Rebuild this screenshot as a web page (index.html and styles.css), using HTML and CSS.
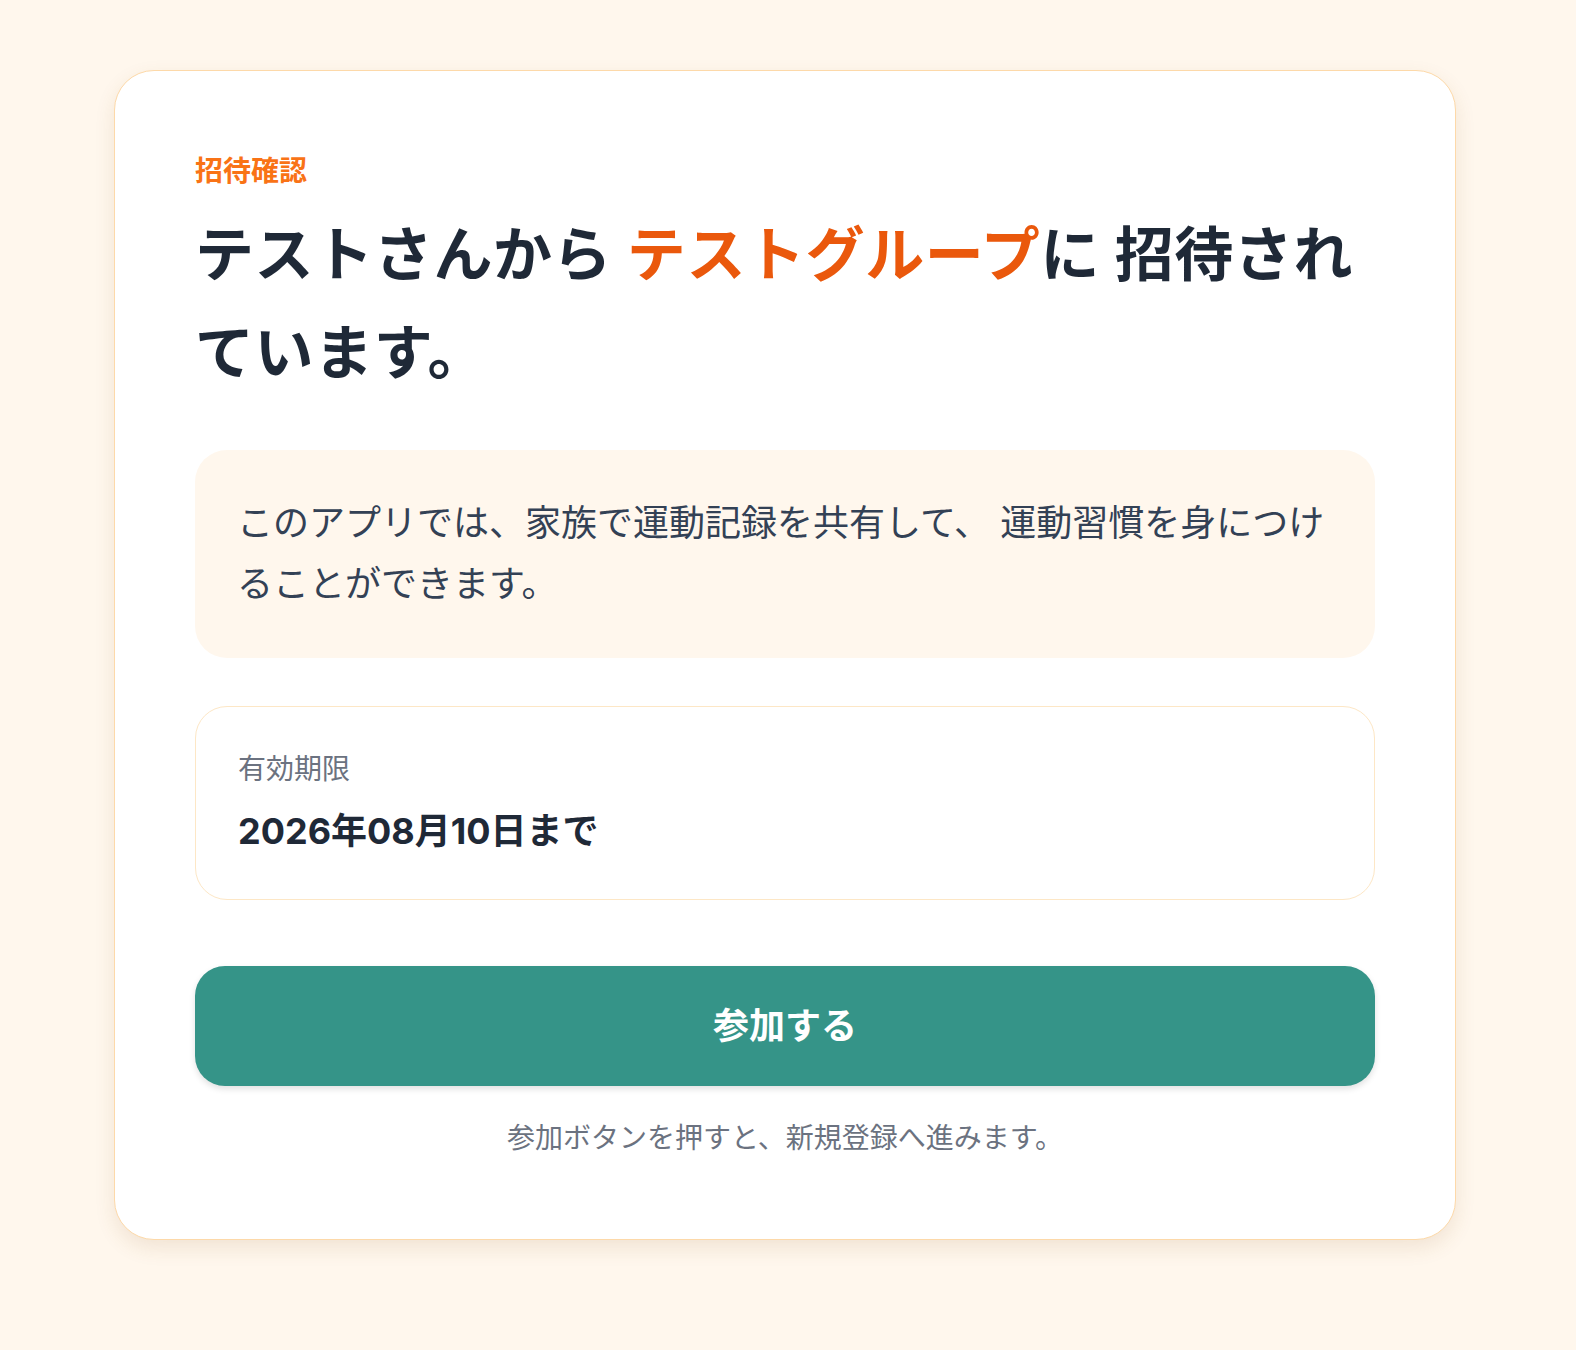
FILE: index.html
```html
<!DOCTYPE html>
<html lang="ja">

<head>
    <meta charset="UTF-8">
    <meta name="viewport" content="width=device-width, initial-scale=1.0">
    <title>招待確認</title>
    <link rel="stylesheet" href="styles.css">
</head>

<body>
    <main class="page">
        <section class="invite-card">
            <p class="eyebrow">招待確認</p>
            <h1 class="invite-title">テストさんから <span class="group-name">テストグループ</span>に 招待されています。</h1>

            <div class="about-box">
                <p>このアプリでは、家族で運動記録を共有して、 運動習慣を身につけることができます。</p>
            </div>

            <div class="expiry-box">
                <div class="expiry-label">有効期限</div>
                <div class="expiry-date">2026年08月10日まで</div>
            </div>

            <button class="join-button" type="button">参加する</button>
            <p class="join-note">参加ボタンを押すと、新規登録へ進みます。</p>
        </section>
    </main>
</body>

</html>
```

FILE: styles.css
```css
body {
    margin: 0;
    background: #fff7ed;
    font-family: Inter, "Noto Sans CJK JP", sans-serif;
    color: #1f2937;
}

.page {
    padding: 70px 120px 100px 114px;
}

.invite-card {
    background: #ffffff;
    border: 1px solid #fdd9a9;
    border-radius: 40px;
    padding: 80px;
    box-shadow: 0 8px 20px rgba(140, 90, 30, 0.12);
}

.eyebrow {
    margin: 0;
    font-size: 28px;
    line-height: 40px;
    font-weight: 700;
    color: #f97316;
}

.invite-title {
    margin: 15px 0 0;
    font-size: 59px;
    line-height: 98px;
    letter-spacing: 0.6px;
    font-weight: 700;
    color: #1f2937;
}

.group-name {
    color: #ea580c;
}

.about-box {
    margin-top: 48px;
    padding: 43px 42px;
    background: #fff7ed;
    border-radius: 32px;
}

.about-box p {
    margin: 0;
    font-size: 36px;
    line-height: 1.7;
    color: #334155;
}

.expiry-box {
    margin-top: 48px;
    padding: 41px 42px;
    border: 1px solid #fde7c6;
    border-radius: 32px;
}

.expiry-label {
    font-size: 28px;
    line-height: 42px;
    color: #6b7280;
}

.expiry-date {
    margin-top: 14px;
    font-size: 36px;
    line-height: 54px;
    font-weight: 700;
    color: #1f2937;
}

.join-button {
    display: block;
    width: 100%;
    height: 120px;
    margin-top: 66px;
    padding: 0 0 6px;
    border: none;
    border-radius: 30px;
    background: #359488;
    color: #ffffff;
    font-family: inherit;
    font-size: 36px;
    font-weight: 700;
    box-shadow: 0 3px 6px rgba(0, 0, 0, 0.12);
    cursor: pointer;
}

.join-note {
    margin: 31px 0 0;
    text-align: center;
    font-size: 28px;
    line-height: 42px;
    color: #6b7280;
}
```
